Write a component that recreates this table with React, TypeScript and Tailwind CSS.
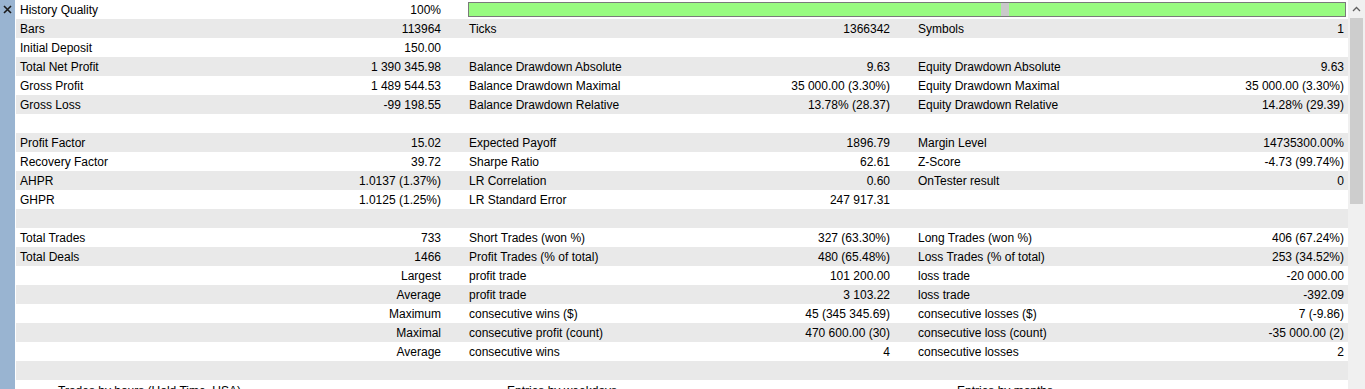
import React from "react";

type Cell = [string, string] | null;
type Row = { cells: [Cell, Cell, Cell]; key: string };

const ROWS: Row[] = [
  { key: "bars", cells: [["Bars", "113964"], ["Ticks", "1366342"], ["Symbols", "1"]] },
  { key: "dep", cells: [["Initial Deposit", "150.00"], null, null] },
  {
    key: "net",
    cells: [
      ["Total Net Profit", "1 390 345.98"],
      ["Balance Drawdown Absolute", "9.63"],
      ["Equity Drawdown Absolute", "9.63"],
    ],
  },
  {
    key: "gp",
    cells: [
      ["Gross Profit", "1 489 544.53"],
      ["Balance Drawdown Maximal", "35 000.00 (3.30%)"],
      ["Equity Drawdown Maximal", "35 000.00 (3.30%)"],
    ],
  },
  {
    key: "gl",
    cells: [
      ["Gross Loss", "-99 198.55"],
      ["Balance Drawdown Relative", "13.78% (28.37)"],
      ["Equity Drawdown Relative", "14.28% (29.39)"],
    ],
  },
  { key: "e1", cells: [null, null, null] },
  {
    key: "pf",
    cells: [["Profit Factor", "15.02"], ["Expected Payoff", "1896.79"], ["Margin Level", "14735300.00%"]],
  },
  {
    key: "rf",
    cells: [["Recovery Factor", "39.72"], ["Sharpe Ratio", "62.61"], ["Z-Score", "-4.73 (99.74%)"]],
  },
  {
    key: "ahpr",
    cells: [["AHPR", "1.0137 (1.37%)"], ["LR Correlation", "0.60"], ["OnTester result", "0"]],
  },
  { key: "ghpr", cells: [["GHPR", "1.0125 (1.25%)"], ["LR Standard Error", "247 917.31"], null] },
  { key: "e2", cells: [null, null, null] },
  {
    key: "tt",
    cells: [
      ["Total Trades", "733"],
      ["Short Trades (won %)", "327 (63.30%)"],
      ["Long Trades (won %)", "406 (67.24%)"],
    ],
  },
  {
    key: "td",
    cells: [
      ["Total Deals", "1466"],
      ["Profit Trades (% of total)", "480 (65.48%)"],
      ["Loss Trades (% of total)", "253 (34.52%)"],
    ],
  },
  { key: "lg", cells: [["", "Largest"], ["profit trade", "101 200.00"], ["loss trade", "-20 000.00"]] },
  { key: "av", cells: [["", "Average"], ["profit trade", "3 103.22"], ["loss trade", "-392.09"]] },
  {
    key: "mx",
    cells: [
      ["", "Maximum"],
      ["consecutive wins ($)", "45 (345 345.69)"],
      ["consecutive losses ($)", "7 (-9.86)"],
    ],
  },
  {
    key: "ml",
    cells: [
      ["", "Maximal"],
      ["consecutive profit (count)", "470 600.00 (30)"],
      ["consecutive loss (count)", "-35 000.00 (2)"],
    ],
  },
  {
    key: "av2",
    cells: [["", "Average"], ["consecutive wins", "4"], ["consecutive losses", "2"]],
  },
  { key: "e3", cells: [null, null, null] },
];

function StatCell({ cell, last }: { cell: Cell; last?: boolean }) {
  return (
    <div
      className={
        last
          ? "flex-1 flex justify-between pl-1 pr-1 pt-[2px]"
          : "w-[449px] shrink-0 flex justify-between pl-1 pr-6 pt-[2px]"
      }
    >
      <span>{cell ? cell[0] : ""}</span>
      <span>{cell ? cell[1] : ""}</span>
    </div>
  );
}

export default function App() {
  return (
    <div
      className="flex h-[389px] w-[1365px] overflow-hidden bg-white text-[12px] text-black"
      style={{ fontFamily: '"Liberation Sans", Arial, sans-serif' }}
    >
      {/* left dock strip */}
      <div className="w-[15px] shrink-0 bg-[#99b4d1] flex justify-center pt-[5px]">
        <svg width="9" height="9" viewBox="0 0 9 9">
          <path d="M1 1l7 7M8 1l-7 7" stroke="#1a1a1a" strokeWidth="1.6" />
        </svg>
      </div>
      <div className="w-px shrink-0 bg-white" />

      {/* stats table */}
      <div className="flex-1 flex flex-col leading-[17px]">
        <div className="flex h-[19px] shrink-0 bg-white">
          <StatCell cell={["History Quality", "100%"]} />
          <div className="flex-1 flex items-center pl-[3px] pr-[2px]">
            <div className="h-[15px] w-full flex border border-[#7a7a7a] bg-[#98fb80]">
              <div className="w-[532px]" />
              <div className="w-[8px] bg-[#c9c9c9]" />
            </div>
          </div>
        </div>
        {ROWS.map((r, i) => (
          <div
            key={r.key}
            className={
              i % 2 === 0 ? "flex h-[19px] shrink-0 bg-[#e9e9e9]" : "flex h-[19px] shrink-0 bg-white"
            }
          >
            <StatCell cell={r.cells[0]} />
            <StatCell cell={r.cells[1]} />
            <StatCell cell={r.cells[2]} last />
          </div>
        ))}
        {/* chart titles, cut by the window edge */}
        <div className="flex h-[19px] shrink-0 bg-white pt-[3px]">
          <div className="w-[449px] shrink-0 pl-[42px]">Trades by hours (Hold Time, USA)</div>
          <div className="w-[449px] shrink-0 pl-[42px]">Entries by weekdays</div>
          <div className="flex-1 pl-[43px]">Entries by months</div>
        </div>
      </div>

      {/* scrollbar */}
      <div className="w-[17px] shrink-0 bg-[#f0f0f0] flex flex-col items-center">
        <div className="h-[17px] w-full flex items-center justify-center">
          <svg width="9" height="6" viewBox="0 0 9 6">
            <path d="M1 5l3.5-3.5L8 5" fill="none" stroke="#606060" strokeWidth="1.3" />
          </svg>
        </div>
        <div className="mt-[1px] h-[186px] w-[13px] bg-[#cdcdcd]" />
      </div>
    </div>
  );
}
